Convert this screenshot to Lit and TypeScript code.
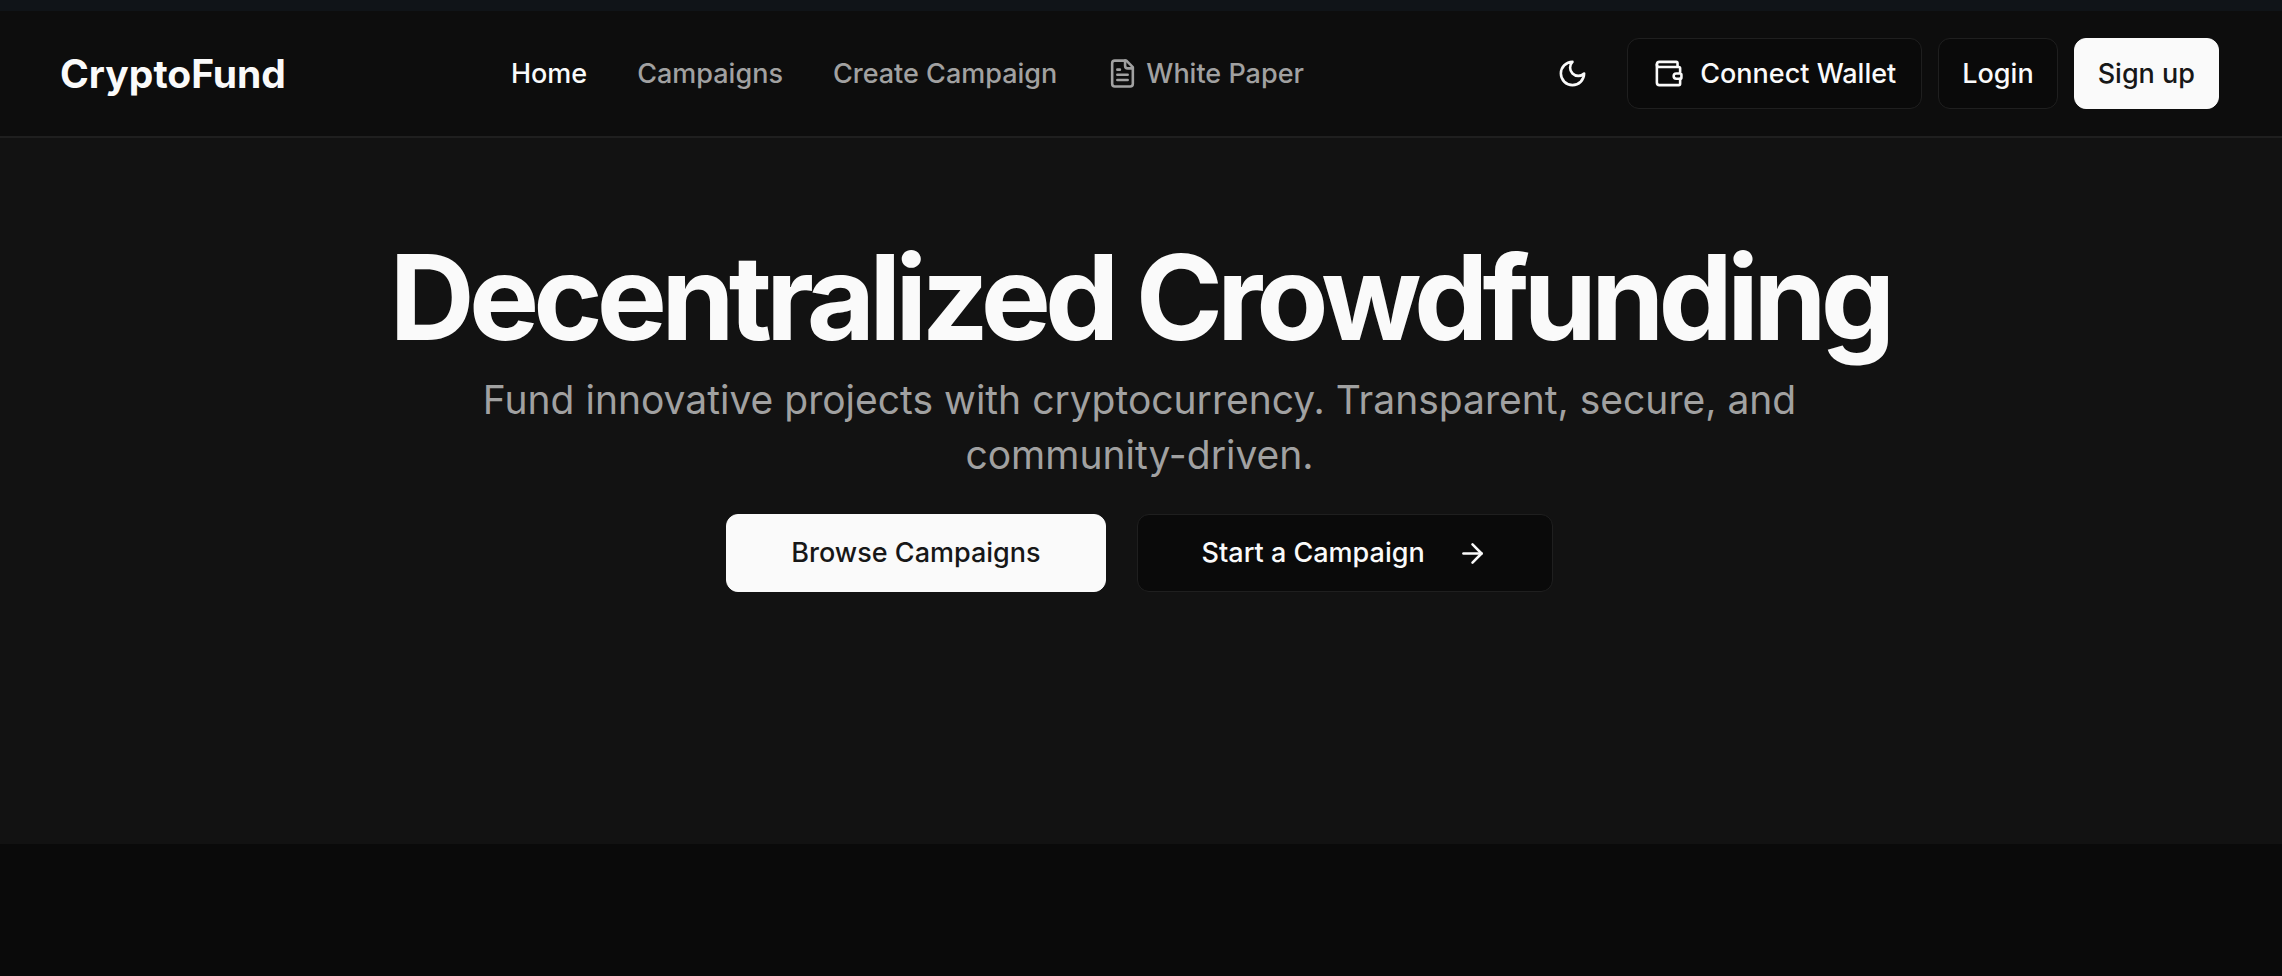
import { LitElement, html, css, svg } from "lit";
import { customElement } from "lit/decorators.js";

const icon = (body: unknown) => html`<svg
  class="icon"
  viewBox="0 0 24 24"
  fill="none"
  stroke="currentColor"
  stroke-width="2"
  stroke-linecap="round"
  stroke-linejoin="round"
  aria-hidden="true"
>${body}</svg>`;

const fileText = svg`<path d="M15 2H6a2 2 0 0 0-2 2v16a2 2 0 0 0 2 2h12a2 2 0 0 0 2-2V7Z"/><path d="M14 2v4a2 2 0 0 0 2 2h4"/><path d="M10 9H8"/><path d="M16 13H8"/><path d="M16 17H8"/>`;
const moon = svg`<path d="M12 3a6 6 0 0 0 9 9 9 9 0 1 1-9-9Z"/>`;
const wallet = svg`<path d="M19 7V4a1 1 0 0 0-1-1H5a2 2 0 0 0 0 4h15a1 1 0 0 1 1 1v4h-3a2 2 0 0 0 0 4h3a1 1 0 0 0 1-1v-2a1 1 0 0 0-1-1"/><path d="M3 5v14a2 2 0 0 0 2 2h15a1 1 0 0 0 1-1v-4"/>`;
const arrow = svg`<path d="M5 12h14"/><path d="m12 5 7 7-7 7"/>`;

@customElement("app-root")
export class AppRoot extends LitElement {
  static styles = css`
    :host {
      display: flex;
      flex-direction: column;
      min-height: 100vh;
      background: #0a0a0a;
      color: #fafafa;
      font-family: Inter, "Liberation Sans", sans-serif;
      font-size: 27px;
      font-weight: 500;
      line-height: 40px;
    }
    * { box-sizing: border-box; }
    a { color: inherit; text-decoration: none; }
    .strip { height: 11px; background: #101418; }
    .header {
      display: flex;
      align-items: center;
      min-height: 127px;
      padding: 0 63px 0 60px;
      background: #0d0d0d;
      border-bottom: 2px solid #1f1f1f;
    }
    .brand { font-size: 39px; font-weight: 700; line-height: 56px; margin-right: 225px; }
    .nav { display: flex; align-items: center; gap: 50px; color: #a1a1a1; }
    .nav a { display: flex; align-items: center; gap: 8px; white-space: nowrap; }
    .nav .active { color: #fafafa; }
    .actions { display: flex; align-items: center; gap: 16px; margin-left: auto; }
    .btn {
      display: inline-flex;
      align-items: center;
      justify-content: center;
      gap: 16px;
      height: 71px;
      padding: 0 23px;
      border: 1px solid #1f1f1f;
      border-radius: 12px;
      background: #0a0a0a;
      color: #fafafa;
      font: inherit;
      white-space: nowrap;
      cursor: pointer;
    }
    .primary { background: #fafafa; border-color: #fafafa; color: #171717; }
    .ghost { width: 78px; padding: 0; background: transparent; border-color: transparent; }
    .wallet { padding: 0 25px; }
    .large { height: 78px; padding: 0 64px; }
    .icon { display: block; flex: none; width: 31px; height: 31px; }
    .hero {
      display: flex;
      flex-direction: column;
      align-items: center;
      min-height: 706px;
      padding: 100px 63px 100px 60px;
      background: #121212;
      text-align: center;
    }
    h1 {
      margin: 0;
      font-size: 118px;
      font-weight: 700;
      line-height: 118px;
      letter-spacing: -0.05em;
    }
    .lead {
      max-width: 1372px;
      margin: 16px 0 32px;
      color: #a1a1a1;
      font-size: 39px;
      font-weight: 400;
      line-height: 55px;
    }
    .cta { display: flex; gap: 31px; }
    .cta .icon { margin-left: 16px; }
  `;

  render() {
    return html`
      <div class="strip"></div>
      <header class="header">
        <a class="brand" href="#">CryptoFund</a>
        <nav class="nav" aria-label="Main">
          <a class="active" href="#" aria-current="page">Home</a>
          <a href="#campaigns">Campaigns</a>
          <a href="#create">Create Campaign</a>
          <a href="#paper">${icon(fileText)}White Paper</a>
        </nav>
        <div class="actions">
          <button class="btn ghost" aria-label="Toggle theme">${icon(moon)}</button>
          <button class="btn wallet">${icon(wallet)}Connect Wallet</button>
          <a class="btn" href="#login">Login</a>
          <a class="btn primary" href="#signup">Sign up</a>
        </div>
      </header>
      <main class="hero">
        <h1>Decentralized Crowdfunding</h1>
        <p class="lead">Fund innovative projects with cryptocurrency. Transparent, secure, and community-driven.</p>
        <div class="cta">
          <a class="btn primary large" href="#campaigns">Browse Campaigns</a>
          <a class="btn large" href="#create">Start a Campaign${icon(arrow)}</a>
        </div>
      </main>
    `;
  }
}
